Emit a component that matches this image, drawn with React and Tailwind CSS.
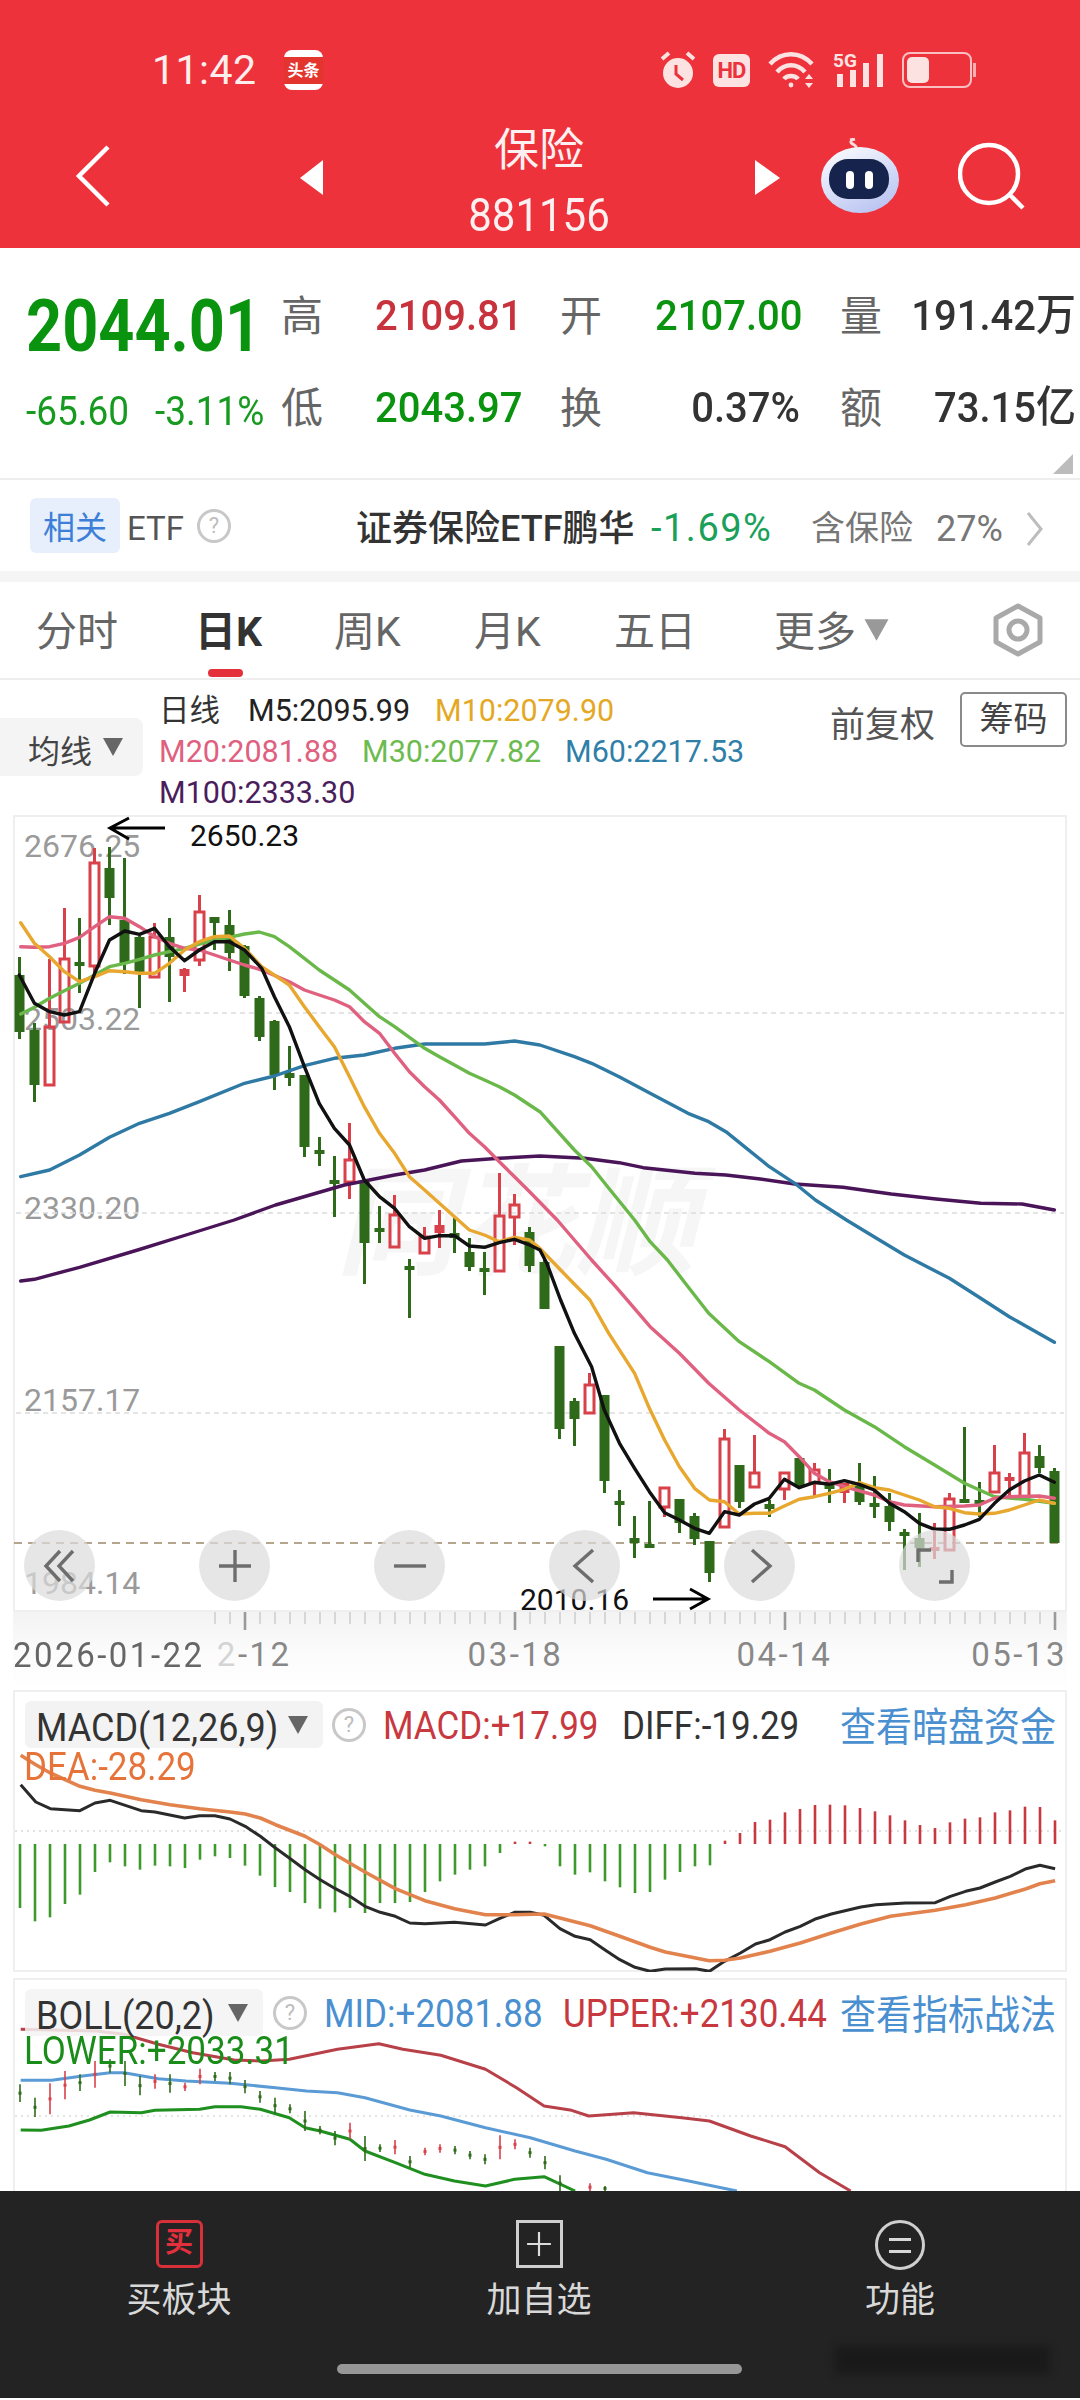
import React from "react";

const C = [
["g",957,975,1032,1039],["g",1023,1030,1085,1102],["h",959,1027,1085,1085],["h",908,959,1022,1022],["g",918,962,964,993],
["h",848,863,966,973],["g",847,868,898,925],["g",858,920,963,974],["g",936,937,972,1008],["h",923,937,977,977],
["g",918,937,957,1002],["s",968,969,976,992],["h",895,912,960,966],["g",917,917,923,950],["g",910,925,953,971],
["g",945,946,996,998],["g",996,998,1037,1041],["g",1020,1021,1075,1090],["g",1046,1073,1078,1086],["g",1075,1075,1147,1157],
["g",1137,1150,1154,1166],["g",1156,1180,1182,1217],["h",1123,1160,1182,1199],["g",1182,1182,1243,1284],["g",1206,1228,1232,1243],
["h",1195,1215,1247,1247],["g",1259,1266,1270,1318],["h",1227,1237,1253,1253],["s",1210,1225,1233,1248],["g",1218,1233,1238,1253],
["g",1238,1252,1267,1271],["g",1252,1268,1272,1295],["h",1173,1216,1271,1271],["h",1194,1205,1217,1245],["g",1227,1232,1266,1272],
["g",1259,1262,1309,1309],["g",1346,1346,1429,1439],["g",1398,1401,1419,1446],["h",1373,1385,1413,1413],["g",1395,1395,1481,1493],
["g",1490,1501,1505,1526],["g",1516,1538,1543,1558],["g",1501,1544,1548,1548],["h",1488,1488,1507,1517],["g",1499,1499,1523,1533],
["g",1513,1516,1539,1545],["g",1541,1541,1573,1582],["h",1429,1439,1527,1527],["g",1465,1465,1502,1508],["h",1435,1473,1487,1487],
["g",1500,1504,1509,1517],["h",1473,1473,1489,1500],["g",1457,1458,1487,1487],["h",1463,1470,1483,1496],["g",1469,1482,1489,1503],
["s",1483,1483,1493,1503],["g",1463,1483,1502,1505],["g",1476,1503,1507,1518],["g",1493,1506,1522,1531],["g",1529,1532,1536,1570],
["g",1513,1538,1548,1567],["s",1523,1547,1551,1559],["h",1493,1499,1550,1550],["g",1427,1499,1503,1503],["g",1482,1500,1503,1517],
["h",1445,1473,1492,1492],["s",1473,1477,1481,1497],["h",1433,1453,1497,1497],["g",1445,1456,1468,1473],["g",1468,1471,1543,1543],
];

const seg = (ox, oy, a) => {
  const out = [];
  for (let i = 0; i < a.length; i += 2) out.push([a[i] + ox, a[i + 1] + oy]);
  return out;
};
const toK = (pts) => pts.map(([x, y]) => `${(x / 2.904).toFixed(1)},${(800 + y / 3).toFixed(1)}`).join(" ");
const toP = (a, base) => seg(0, 0, a).map(([x, y]) => `${(x / 1.452).toFixed(1)},${(base + y / 3).toFixed(1)}`).join(" ");

const MA5 = [
  ...seg(0,0,[56,525,100,610,144,635,187,645,231,635,275,520,318,420,362,393,405,403,449,385,492,440,536,482,579,450,623,425,666,425,710,450,760,505,797,590,840,680,884,800,927,910,971,985,1015,1035,1058,1140,1102,1190,1146,1225]),
  ...seg(0,1260,[1189,20,1233,55,1276,47,1320,47,1363,78,1407,82,1450,68,1494,58,1538,75]),
  ...seg(1568,1260,[0,90,20,130,60,240,100,340,150,440,187,570,231,670,275,745,318,815,362,878,405,900,449,925,492,940,536,875,579,885,623,852,666,835,710,778,753,803,797,787,840,793,884,782,927,793,971,810,1015,850,1058,875,1102,910,1146,928,1189,928,1233,915,1276,898,1320,850,1363,810,1407,783,1450,765,1494,787]),
];
const MA10 = [
  ...seg(0,0,[60,368,100,430,144,470,187,515,231,545,275,530,318,512,362,515,405,520,449,520,492,490,536,450,579,425,623,410,666,408,710,445,760,500,840,555,884,620,927,680,971,740,1015,830,1058,920,1102,1000,1146,1060,1189,1130,1233,1170,1276,1210,1320,1250]),
  ...seg(0,1260,[1363,30,1407,45,1450,65,1494,52,1538,60]),
  ...seg(1568,1260,[0,85,60,150,145,240,200,340,275,460,318,565,362,660,405,740,449,805,492,840,536,845,579,882,623,880,666,880,710,858,753,838,797,830,840,820,884,808,927,788,971,803,1015,810,1058,825,1102,840,1146,860,1189,865,1233,878,1276,882,1320,880,1363,870,1407,855,1450,840,1494,850]),
];
const MA20 = [
  ...seg(0,0,[60,440,100,442,144,440,187,430,231,412,275,380,318,350,362,355,405,380,449,410,492,430,536,445,579,450,623,465,666,480,710,495,760,510,840,545,884,570,927,585,971,600,1015,620,1058,665,1102,700,1146,760,1189,815,1233,860,1276,900,1320,950,1363,1000,1407,1040,1450,1085,1494,1130,1538,1175]),
  ...seg(1568,1260,[50,0,150,120,220,200,320,320,405,400,490,490,579,570,666,640,710,665,753,710,797,760,840,785,884,800,971,825,1015,845,1058,855,1146,860,1233,858,1276,855,1320,835,1363,830,1450,828,1494,835]),
];
const MA30 = [
  ...seg(0,0,[60,642,100,622,144,595,187,572,231,550,275,525,318,500,362,490,405,478,449,465,492,455,536,445,579,432,623,420,666,412,710,402,753,396,797,410,840,440,884,475,927,510,971,540,1015,570,1058,610,1102,650,1146,680,1189,712,1233,745,1276,770,1320,795,1363,820,1407,840,1450,860,1494,885,1538,915]),
  ...seg(1568,0,[0,935,100,1050,150,1100,200,1165]),
  ...seg(1568,1260,[275,0,320,65,370,120,430,200,490,280,579,365,666,425,753,490,797,510,884,570,971,620,1058,680,1146,735,1233,790,1320,830,1407,838,1494,850]),
];
const MA60 = [
  ...seg(0,0,[60,1130,144,1110,231,1065,318,1012,405,970,492,940,579,905,710,850,797,828,884,797,971,775,1058,765,1146,745,1233,732,1320,732,1407,732,1494,723]),
  ...seg(1568,0,[0,735,100,770,150,790,230,830,320,880,430,940,490,965,540,995,600,1045,666,1100,740,1150,800,1200]),
  ...seg(1568,1260,[890,0,970,50,1058,105,1189,175,1280,235,1363,290,1494,367]),
];
const MA100 = [
  ...seg(0,1260,[60,183,100,178,231,142,400,90,540,45]),
  ...seg(0,0,[680,1260,800,1215,890,1188,1000,1155,1146,1125,1233,1110,1340,1083,1450,1075]),
  ...seg(1568,0,[0,1068,130,1075,230,1088,300,1103,450,1120,540,1125,640,1137,740,1152,880,1162,1020,1182,1150,1197,1280,1210,1400,1212,1494,1230]),
];

const HIST = [690,730,718,678,650,582,553,565,575,563,565,570,545,535,540,563,593,627,642,675,692,703,690,705,675,675,672,642,610,590,575,565,525,491,491,505,565,590,583,610,628,645,642,605,582,565,562,488,465,432,425,403,393,381,380,382,390,400,412,427,441,450,433,422,418,403,397,386,387,427];
const DIFF = [30,320,52,372,73,392,116,398,138,375,160,367,182,382,205,398,225,402,268,420,290,413,312,413,334,423,356,445,378,475,400,510,420,540,443,575,465,605,487,632,508,655,530,685,552,703,574,715,595,735,617,737,660,733,705,741,725,722,747,703,770,703,790,712,813,752,835,775,857,785,878,815,900,845,922,868,944,880,966,873,1010,872,1030,880,1052,850,1075,825,1097,798,1118,785,1140,762,1162,745,1185,722,1207,708,1250,687,1272,680,1315,675,1358,674,1380,655,1402,640,1423,630,1445,612,1467,595,1490,572,1510,562,1532,572];
const DEA = [30,232,52,260,73,285,116,325,138,337,160,345,205,365,247,380,290,392,334,402,356,408,378,420,400,440,443,475,465,500,487,530,530,582,574,632,617,668,660,692,705,710,747,710,790,708,813,720,857,743,900,775,944,808,966,822,1010,840,1030,848,1052,847,1075,840,1118,820,1162,795,1207,765,1250,738,1293,715,1358,697,1402,680,1445,660,1490,632,1510,617,1532,608];

const UPPER = [30,160,140,165,180,175,230,205,280,230,340,252,380,255,420,250,490,220,550,203,585,220,640,238,705,280,750,335,790,390,830,403,855,420,920,410,990,425,1030,435,1090,480,1140,512,1190,590,1235,645];
const MID = [30,313,75,313,120,300,160,290,180,290,230,308,270,315,334,322,400,335,445,345,490,350,530,365,595,402,640,420,705,455,770,485,835,525,880,550,940,590,1000,615,1070,645];
const LOWER = [30,462,60,463,100,450,130,432,160,408,205,410,225,403,290,400,312,392,350,392,378,400,420,425,443,455,465,465,508,490,530,525,574,560,617,595,660,615,705,630,747,610,790,602,835,645];
const MINI = [[325,378,0],[365,423,0],[322,415,1],[285,370,1],[295,345,0],[255,335,1],[250,290,0],[255,330,0],[300,358,0],[295,338,1],[295,350,0],[320,345,1],[278,325,1],[288,315,0],[288,325,0],[312,352,0],[345,380,0],[365,413,0],[385,412,0],[405,465,0],[450,475,0],[465,508,0],[440,490,1],[480,555,0],[505,528,0],[492,535,1],[540,575,0],[515,538,1],[505,530,1],[510,535,0],[525,550,0],[535,565,0],[478,550,1],[490,520,1],[515,545,0],[540,580,0],[598,645,0],[0,0,0],[622,645,1],[630,645,0]];

const cx = (i) => 19.5 + 15 * i;
const TALL = "inline-block scale-y-[1.1] translate-y-[3px]";

function Frame({ className = "", children }) {
  return <div className={`relative mx-[13px] border-2 border-[#efefef] ${className}`}>{children}</div>;
}

function Question({ className = "" }) {
  return (
    <span className={`flex items-center justify-center w-[34px] h-[34px] rounded-full border-[3px] border-[#c8c8c8] text-[#bdbdbd] text-[22px] ${className}`}>?</span>
  );
}

function Tri({ className = "" }) {
  return <svg viewBox="0 0 20 20" className={className}><path d="M0 1 H20 L10 19 Z" fill="currentColor" /></svg>;
}

function Candles() {
  return C.map((c, i) => {
    const x = cx(i);
    const col = c[0] === "g" ? "#2f6a1b" : "#d8414a";
    return (
      <g key={i}>
        <line x1={x} x2={x} y1={c[1]} y2={c[2]} stroke={col} strokeWidth="3" />
        <line x1={x} x2={x} y1={c[3]} y2={c[4]} stroke={col} strokeWidth="3" />
        {c[0] === "h" ? (
          <rect x={x - 4.5} y={c[2]} width="9" height={c[3] - c[2]} fill="none" stroke={col} strokeWidth="3" />
        ) : (
          <rect x={x - 5} y={c[2]} width="10" height={Math.max(c[3] - c[2], 4)} fill={col} />
        )}
      </g>
    );
  });
}

function KLine({ pts, color }) {
  return <polyline points={toK(pts)} fill="none" stroke={color} strokeWidth="3.4" strokeLinejoin="round" strokeLinecap="round" />;
}

function RoundBtn({ className, children }) {
  return (
    <div className={`absolute top-[713px] w-[71px] h-[71px] rounded-full bg-[#dcdcdc]/70 z-20 flex items-center justify-center ${className}`}>
      <svg viewBox="0 0 40 40" className="w-[40px] h-[40px]" fill="none" stroke="#6d6d6d" strokeWidth="3.4">{children}</svg>
    </div>
  );
}

export default function App() {
  return (
    <div className="relative w-[1080px] h-[2400px] overflow-hidden bg-white text-[#333] [font-family:Roboto,'Noto_Sans_CJK_SC',sans-serif]">
      {/* header */}
      <header className="h-[248px] bg-[#ee323c] text-white">
        <div className="h-[116px] pt-[24px] flex items-center">
          <span className="ml-[152px] w-[106px] text-[41px] leading-none text-[#fdeeee] tracking-[0.5px]">11:42</span>
          <span className="ml-[26px] w-[39px] h-[40px] rounded-[8px] bg-[#fff] flex items-center justify-center">
            <span className="w-full h-[27px] bg-[#e4342e] text-white text-[16px] leading-[27px] text-center font-bold">头条</span>
          </span>
          <svg viewBox="0 0 36 40" className="ml-[337px] w-[36px] h-[40px]" fill="#fde2e2">
            <circle cx="18" cy="23" r="15" />
            <path d="M16 15 V24 L23 30" stroke="#ee323c" strokeWidth="3" fill="none" />
            <path d="M2 9 L9 3 M34 9 L27 3" stroke="#fde2e2" strokeWidth="4" />
          </svg>
          <span className="ml-[17px] w-[37px] h-[33px] rounded-[6px] bg-[#fde2e2] text-[#ee323c] text-[22px] leading-[33px] text-center font-bold tracking-[-1px]">HD</span>
          <svg viewBox="0 0 48 38" className="ml-[18px] w-[48px] h-[38px]" fill="none" stroke="#fde2e2" strokeWidth="4.5">
            <path d="M2 13 C14 0 32 0 44 13" />
            <path d="M9 21 C17 12 29 12 37 21" />
            <path d="M16 28 C19 24 27 24 30 28" />
            <circle cx="23" cy="34" r="2.4" fill="#fde2e2" stroke="none" />
            <path d="M37 28 L41 23 L45 28 Z M37 32 L41 37 L45 32 Z" fill="#fde2e2" stroke="none" />
          </svg>
          <svg viewBox="0 0 52 40" className="ml-[17px] w-[52px] h-[40px]" fill="#fde2e2">
            <text x="0" y="17" fontSize="19" fontWeight="700" fontFamily="Roboto">5G</text>
            <rect x="4" y="24" width="6" height="13" />
            <rect x="17" y="20" width="6" height="17" />
            <rect x="30" y="13" width="6" height="24" />
            <rect x="44" y="4" width="6" height="33" />
          </svg>
          <span className="ml-[17px] w-[70px] h-[36px] rounded-[8px] border-2 border-[#fde2e2]/80 p-[3px] flex">
            <span className="w-[22px] h-full rounded-[5px] bg-[#fde2e2]" />
          </span>
          <span className="ml-[1px] w-[3px] h-[14px] bg-[#fde2e2]/70" />
        </div>
        <div className="h-[132px] flex items-center">
          <svg viewBox="0 0 35 62" className="ml-[75px] mb-[12px] w-[35px] h-[62px]" fill="none" stroke="#fff" strokeWidth="4.5"><path d="M33 2 L4 31 L33 60" /></svg>
          <svg viewBox="0 0 23 35" className="ml-[190px] mb-[10px] w-[23px] h-[35px]"><path d="M23 0 V35 L0 18 Z" fill="#fff" /></svg>
          <div className="w-[432px] flex flex-col items-center">
            <span className="text-[45px] leading-[58px] text-[#fdf0f0] -mt-[2px]">保险</span>
            <span className="text-[42px] leading-[50px] mt-[10px] text-[#fdf0f0] scale-y-[1.12]">881156</span>
          </div>
          <svg viewBox="0 0 25 35" className="mb-[10px] w-[25px] h-[35px]"><path d="M0 0 V35 L25 18 Z" fill="#fff" /></svg>
          <svg viewBox="0 0 80 76" className="ml-[40px] mb-[12px] w-[80px] h-[76px]">
            <defs>
              <linearGradient id="rb" x1="0" y1="0" x2="0.6" y2="1"><stop offset="0" stopColor="#ffffff" /><stop offset="1" stopColor="#bcc6f2" /></linearGradient>
            </defs>
            <path d="M36 10 C37 6 30 7 31 3 M30 2 L35 1" stroke="#fbdcdc" strokeWidth="3" fill="none" />
            <ellipse cx="40" cy="42" rx="39" ry="33" fill="url(#rb)" />
            <rect x="9" y="21" width="60" height="40" rx="19" fill="#16244d" />
            <rect x="26" y="33" width="8" height="18" rx="4" fill="#fff" />
            <rect x="45" y="33" width="8" height="18" rx="4" fill="#fff" />
          </svg>
          <svg viewBox="0 0 68 68" className="ml-[58px] mb-[12px] w-[68px] h-[68px]" fill="none" stroke="#fff" strokeWidth="4.5">
            <circle cx="31" cy="32" r="29" />
            <path d="M51 52 L65 66" />
          </svg>
        </div>
      </header>

      {/* quote */}
      <section className="h-[232px] border-b-2 border-[#eeeeee] flex">
        <div className="w-[281px] pl-[26px]">
          <div className="mt-[44px] h-[70px] text-[63px] leading-[70px] font-bold text-[#0a930f] scale-y-[1.15] origin-center">2044.01</div>
          <div className="mt-[28px] flex text-[#169a1f] text-[37px] leading-[44px]">
            <span className="w-[129px] scale-y-[1.1]">-65.60</span>
            <span className="scale-y-[1.1]">-3.11%</span>
          </div>
        </div>
        <div className="flex-1 pt-[22px] text-[40px]">
          <div className="h-[92px] flex items-center">
            <span className="w-[94px] text-[42px] text-[#666]">高</span>
            <span className="w-[185px] font-medium text-[#c8323c] scale-y-[1.07] origin-left">2109.81</span>
            <span className="w-[95px] text-[42px] text-[#666]">开</span>
            <span className="w-[145px] font-medium text-[#0a930f] text-right scale-y-[1.07]">2107.00</span>
            <span className="ml-[40px] w-[60px] text-[42px] text-[#666]">量</span>
            <span className="w-[176px] font-medium text-[#333] text-right scale-y-[1.07]">191.42万</span>
          </div>
          <div className="h-[92px] flex items-center">
            <span className="w-[94px] text-[42px] text-[#666]">低</span>
            <span className="w-[185px] font-medium text-[#0a930f] scale-y-[1.07] origin-left">2043.97</span>
            <span className="w-[95px] text-[42px] text-[#666]">换</span>
            <span className="w-[145px] font-medium text-[#333] text-right scale-y-[1.07]">0.37%</span>
            <span className="ml-[40px] w-[60px] text-[42px] text-[#666]">额</span>
            <span className="w-[176px] font-medium text-[#333] text-right scale-y-[1.07]">73.15亿</span>
          </div>
          <div className="flex justify-end pr-[7px]">
            <svg viewBox="0 0 20 20" className="w-[20px] h-[20px]"><path d="M20 0 V20 H0 Z" fill="#bcbcbc" /></svg>
          </div>
        </div>
      </section>

      {/* ETF */}
      <section className="h-[91px] flex items-center text-[#555]">
        <span className="ml-[30px] w-[90px] h-[55px] rounded-[6px] bg-[#e6effb] text-[#3d7fd8] text-[32px] leading-[55px] text-center">
          <span className="inline-block translate-y-[3px]">相关</span>
        </span>
        <span className="ml-[7px] w-[60px] text-[33px] translate-y-[3px]">ETF</span>
        <Question className="ml-[10px] w-[30px] h-[30px] text-[19px] border-2" />
        <span className="ml-[125px] w-[278px] text-[36px] font-medium text-[#333] whitespace-nowrap translate-y-[3px]">证券保险ETF鹏华</span>
        <span className="ml-[17px] w-[126px] text-[38px] text-[#1aa05a] tracking-[1.5px] whitespace-nowrap translate-y-[3px]">-1.69%</span>
        <span className="ml-[34px] w-[125px] text-[34px] text-[#777] whitespace-nowrap translate-y-[3px]">含保险</span>
        <span className="w-[68px] text-[36px] text-[#777] translate-y-[3px]">27%</span>
        <svg viewBox="0 0 17 34" className="ml-[22px] w-[17px] h-[34px] translate-y-[3px]" fill="none" stroke="#bdbdbd" strokeWidth="3"><path d="M2 1 L15 17 L2 33" /></svg>
      </section>
      <div className="h-[11px] bg-[#f5f5f5]" />

      {/* tabs */}
      <nav className="h-[98px] flex items-center border-b-2 border-[#eeeeee] text-[41px] text-[#666] relative">
        <span className="ml-[36px] w-[159px] translate-y-[3px]">分时</span>
        <span className="w-[139px] font-bold text-[#333] translate-y-[3px]">日K</span>
        <span className="w-[140px] translate-y-[3px]">周K</span>
        <span className="w-[140px] translate-y-[3px]">月K</span>
        <span className="w-[160px] translate-y-[3px]">五日</span>
        <span className="w-[90px] translate-y-[3px]">更多</span>
        <Tri className="w-[25px] h-[24px] text-[#999]" />
        <svg viewBox="0 0 54 54" className="ml-[102px] w-[54px] h-[54px]" fill="none" stroke="#a9a9a9" strokeWidth="5">
          <path d="M27 3 L49 15 V39 L27 51 L5 39 V15 Z" strokeLinejoin="round" />
          <circle cx="27" cy="27" r="9" />
        </svg>
        <span className="absolute left-[208px] bottom-[1px] w-[35px] h-[8px] rounded-full bg-[#e4303a]" />
      </nav>

      {/* legend */}
      <section className="h-[135px] flex">
        <div className="mt-[38px] w-[143px] h-[58px] rounded-r-[8px] bg-[#f4f4f4] flex items-center text-[32px] text-[#444]">
          <span className="ml-[28px] w-[75px] translate-y-[5px]">均线</span>
          <Tri className="w-[20px] h-[20px] text-[#666]" />
        </div>
        <div className="ml-[16px] w-[671px] mt-[10px] text-[30.5px] leading-[41px] whitespace-nowrap">
          <div>
            <span className="text-[#333] w-[89px] inline-block">日线</span>
            <span className="text-[#222] inline-block w-[187px]">M5:2095.99</span>
            <span className="text-[#e5a824]">M10:2079.90</span>
          </div>
          <div>
            <span className="text-[#e0607f] inline-block w-[203px]">M20:2081.88</span>
            <span className="text-[#6cbb4f] inline-block w-[203px]">M30:2077.82</span>
            <span className="text-[#2f7fa8]">M60:2217.53</span>
          </div>
          <div className="text-[#4a1d5c]">M100:2333.30</div>
        </div>
        <span className="w-[130px] mt-[24px] text-[35px] leading-[44px] text-[#555] whitespace-nowrap">前复权</span>
        <span className="mt-[12px] w-[107px] h-[55px] rounded-[5px] border-2 border-[#8a8a8a] text-[34px] leading-[50px] text-center text-[#444]">筹码</span>
      </section>

      {/* K chart */}
      <Frame className="h-[797px]">
        <span className="absolute left-[321px] top-[352px] text-[#f6f6f6] text-[120px] leading-[110px] font-bold italic whitespace-nowrap">同花顺</span>
        <span className="absolute left-[9px] top-[13px] text-[32px] leading-[32px] text-[#9a9a9a]">2676.25</span>
        <span className="absolute left-[9px] top-[186px] text-[32px] leading-[32px] text-[#9a9a9a]">2503.22</span>
        <span className="absolute left-[9px] top-[375px] text-[32px] leading-[32px] text-[#9a9a9a]">2330.20</span>
        <span className="absolute left-[9px] top-[567px] text-[32px] leading-[32px] text-[#9a9a9a]">2157.17</span>
        <span className="absolute left-[9px] top-[750px] text-[32px] leading-[32px] text-[#9a9a9a]">1984.14</span>
        <svg viewBox="0 815 1080 797" className="absolute left-[-15px] top-[-2px] w-[1080px] h-[797px] overflow-visible">
          <g stroke="#dcdcdc" strokeWidth="1.5" strokeDasharray="5 4">
            <line x1="150" x2="1064" y1="1013" y2="1013" />
            <line x1="16" x2="1064" y1="1213" y2="1213" />
            <line x1="16" x2="1064" y1="1413" y2="1413" />
          </g>
          <line x1="14" x2="1064" y1="1543" y2="1543" stroke="#b5a58e" strokeWidth="2" strokeDasharray="8 6" />
          <Candles />
          <KLine pts={MA100} color="#4a1458" />
          <KLine pts={MA60} color="#2f7aa5" />
          <KLine pts={MA30} color="#6ab84a" />
          <KLine pts={MA20} color="#e0607f" />
          <KLine pts={MA10} color="#e8a830" />
          <KLine pts={MA5} color="#111111" />
          <g fill="none" stroke="#000" strokeWidth="3">
            <path d="M165 828 H110 M129 818 L110 828 L129 839" />
            <path d="M653 1599 H708 M690 1589 L708 1599 L690 1609" />
          </g>
        </svg>
        <span className="absolute left-[175px] top-[4px] text-[30px] leading-[30px] text-[#111]">2650.23</span>
        <span className="absolute left-[505px] top-[768px] text-[30px] leading-[30px] text-[#111]">2010.16</span>
        <RoundBtn className="left-[9px]"><path d="M20 5 L6 20 L20 35 M33 5 L19 20 L33 35" /></RoundBtn>
        <RoundBtn className="left-[184px]"><path d="M20 4 V36 M4 20 H36" /></RoundBtn>
        <RoundBtn className="left-[359px]"><path d="M4 20 H36" /></RoundBtn>
        <RoundBtn className="left-[534px]"><path d="M28 4 L10 20 L28 36" /></RoundBtn>
        <RoundBtn className="left-[709px]"><path d="M12 4 L30 20 L12 36" /></RoundBtn>
        <RoundBtn className="left-[884px]"><path d="M3 16 V4 H16 M37 24 V36 H24" /></RoundBtn>
      </Frame>

      {/* x axis */}
      <div className="relative h-[78px] mx-[13px]">
        <div className="absolute inset-0 bg-gradient-to-b from-[#f3f3f3] via-[#fbfbfb] to-white" />
        <svg viewBox="13 1610 1054 20" className="relative w-[1054px] h-[20px]">
          {Array.from({ length: 57 }, (_, k) => {
            const x = 215 + 15 * k;
            const major = (x - 245) % 270 === 0;
            return <line key={k} x1={x} x2={x} y1="1610" y2={major ? 1628 : 1622} stroke={major ? "#9a9a9a" : "#cccccc"} strokeWidth={major ? 2.6 : 1.5} />;
          })}
        </svg>
        <div className="relative flex h-[46px] items-center text-[33px] tracking-[2.5px] text-[#888] whitespace-nowrap">
          <span className="w-[204px] text-[#666] scale-y-[1.05] origin-left">2026-01-22</span>
          <span className="w-[251px]"><span className="text-[#d4d4d4]">2</span>-12</span>
          <span className="w-[269px]">03-18</span>
          <span className="w-[235px]">04-14</span>
          <span>05-13</span>
        </div>
      </div>

      {/* MACD */}
      <Frame className="h-[282px]">
        <svg viewBox="0 1692 1080 282" className="absolute left-[-15px] top-[-2px] w-[1080px] h-[282px]">
          <line x1="15" x2="1065" y1="1833" y2="1833" stroke="#d8d8d8" strokeWidth="1.5" strokeDasharray="2 4" />
          {HIST.map((v, i) => {
            const y = 1680 + v / 3;
            const x = 20 + 15 * i;
            return <line key={i} x1={x} x2={x} y1="1846" y2={y} stroke={y < 1846 ? "#c8383f" : "#3d9a2a"} strokeWidth="2.6" />;
          })}
          <polyline points={toP(DIFF, 1680)} fill="none" stroke="#2a2a2a" strokeWidth="3" strokeLinejoin="round" />
          <polyline points={toP(DEA, 1680)} fill="none" stroke="#e2834d" strokeWidth="3.6" strokeLinejoin="round" />
        </svg>
        <div className="relative pl-[10px] pt-[9px] text-[35px] whitespace-nowrap">
          <div className="flex items-center h-[47px]">
            <div className="w-[298px] h-[47px] rounded-[6px] bg-[#f3f3f3] flex items-center text-[#333]">
              <span className={`ml-[11px] w-[252px] text-[36px] ${TALL}`}>MACD(12,26,9)</span>
              <Tri className="w-[20px] h-[20px] text-[#666]" />
            </div>
            <Question className="ml-[9px]" />
            <span className={`ml-[17px] w-[239px] text-[#c8383f] ${TALL}`}>MACD:+17.99</span>
            <span className={`w-[218px] text-[#333] ${TALL}`}>DIFF:-19.29</span>
            <span className={`text-[36px] text-[#4a8fd0] ${TALL}`}>查看暗盘资金</span>
          </div>
          <div className="h-[40px] leading-[40px] text-[#e5733a]">
            <span className="-ml-[1px] inline-block scale-y-[1.1]">DEA:-28.29</span>
          </div>
        </div>
      </Frame>

      <div className="h-[6px]" />

      {/* BOLL */}
      <Frame className="h-[213px] overflow-hidden border-b-0">
        <svg viewBox="0 1982 1080 213" className="absolute left-[-15px] top-[-2px] w-[1080px] h-[213px]">
          <line x1="15" x2="1065" y1="2120" y2="2120" stroke="#dcdcdc" strokeWidth="1.5" strokeDasharray="2 4" />
          <polyline points={toP(UPPER, 1980)} fill="none" stroke="#b84048" strokeWidth="3" strokeLinejoin="round" />
          <polyline points={toP(MID, 1980)} fill="none" stroke="#5b9bd5" strokeWidth="3" strokeLinejoin="round" />
          <polyline points={toP(LOWER, 1980)} fill="none" stroke="#1f8f1f" strokeWidth="3" strokeLinejoin="round" />
          {MINI.map((m, i) => {
            if (!m[1]) return null;
            const x = 20 + 15 * i;
            const t = 1980 + m[0] / 3;
            const b = 1980 + m[1] / 3;
            const col = m[2] ? "#d8414a" : "#2f6a1b";
            return (
              <g key={i}>
                <line x1={x} x2={x} y1={t} y2={b} stroke={col} strokeWidth="1.6" />
                <line x1={x - 1.5} x2={x + 1.5} y1={(t + b) / 2} y2={(t + b) / 2} stroke={col} strokeWidth="3" />
              </g>
            );
          })}
        </svg>
        <div className="relative pl-[10px] pt-[9px] text-[35px] whitespace-nowrap">
          <div className="flex items-center h-[47px]">
            <div className="w-[238px] h-[47px] rounded-[6px] bg-[#f3f3f3]/85 flex items-center text-[#333]">
              <span className={`ml-[11px] w-[192px] text-[36px] ${TALL}`}>BOLL(20,2)</span>
              <Tri className="w-[20px] h-[20px] text-[#666]" />
            </div>
            <Question className="ml-[10px]" />
            <span className={`ml-[17px] w-[239px] text-[#4a8fd0] ${TALL}`}>MID:+2081.88</span>
            <span className={`w-[277px] text-[#c8383f] ${TALL}`}>UPPER:+2130.44</span>
            <span className={`text-[36px] text-[#4a8fd0] ${TALL}`}>查看指标战法</span>
          </div>
          <div className="-mt-[4px] h-[40px] leading-[40px] text-[#1a8c1a]">
            <span className="-ml-[1px] inline-block scale-y-[1.1]">LOWER:+2033.31</span>
          </div>
        </div>
      </Frame>

      {/* bottom bar */}
      <footer className="relative h-[207px] bg-[#232323] flex pt-[29px] text-[35px] text-[#d8d8d8]">
        <div className="w-[358px] flex flex-col items-center">
          <span className="w-[47px] h-[48px] rounded-[6px] border-[3px] border-[#d8303a] text-[#e3303c] text-[28px] leading-[40px] text-center font-bold">买</span>
          <span className="mt-[10px] leading-[46px]">买板块</span>
        </div>
        <div className="w-[362px] flex flex-col items-center">
          <span className="w-[47px] h-[48px] border-[3px] border-[#cfcfcf] flex items-center justify-center">
            <svg viewBox="0 0 24 24" className="w-[26px] h-[26px]" fill="none" stroke="#dcdcdc" strokeWidth="2"><path d="M12 1 V23 M1 12 H23" /></svg>
          </span>
          <span className="mt-[10px] leading-[46px]">加自选</span>
        </div>
        <div className="w-[360px] flex flex-col items-center">
          <span className="w-[50px] h-[50px] rounded-full border-[3px] border-[#cfcfcf] flex flex-col items-center justify-center gap-[9px]">
            <span className="w-[22px] h-[3px] bg-[#d8d8d8]" />
            <span className="w-[22px] h-[3px] bg-[#d8d8d8]" />
          </span>
          <span className="mt-[8px] leading-[46px]">功能</span>
        </div>
        <span className="absolute left-[337px] top-[173px] w-[405px] h-[10px] rounded-full bg-[#979797]" />
        <span className="absolute left-[835px] top-[155px] w-[215px] h-[28px] bg-[#111] opacity-50 blur-[5px]" />
      </footer>
    </div>
  );
}
